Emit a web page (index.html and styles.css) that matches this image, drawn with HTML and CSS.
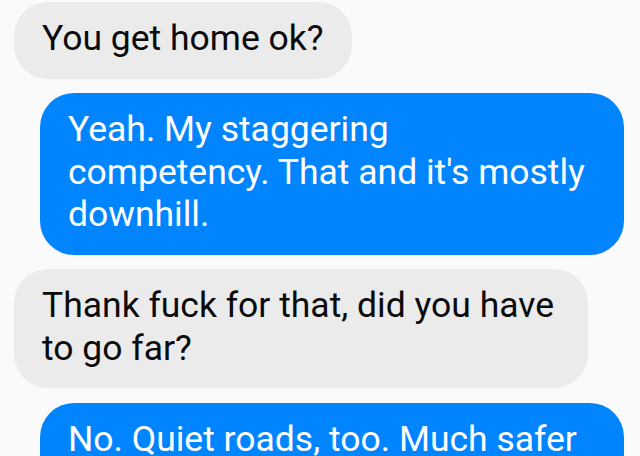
FILE: index.html
```html
<!DOCTYPE html>
<html lang="en">
<head>
  <meta charset="UTF-8">
  <title>Messages</title>
  <link rel="stylesheet" href="styles.css">
</head>
<body>
  <div class="thread">
    <div class="bubble in">You get home ok?</div>
    <div class="bubble out">Yeah. My staggering competency. That and it's mostly downhill.</div>
    <div class="bubble in">Thank fuck for that, did you have to go far?</div>
    <div class="bubble out">No. Quiet roads, too. Much safer than the alternative.</div>
  </div>
</body>
</html>
```

FILE: styles.css
```css
body {
  margin: 0;
  background-color: #fafafa;
  font-family: 'Roboto', sans-serif;
  overflow: hidden;
}

.thread {
  display: flex;
  flex-direction: column;
  gap: 14.5px;
  padding-top: 2px;
}

.bubble {
  font-size: 35.5px;
  line-height: 42.5px;
  padding: 15px 28px 19px;
  border-radius: 34px;
  box-sizing: border-box;
}

.in {
  align-self: flex-start;
  margin-left: 14px;
  max-width: 574px;
  background-color: #ebebeb;
  color: #0a0a0a;
}

.out {
  margin-left: 40px;
  margin-right: 16px;
  background-color: #0185fe;
  color: #fff;
}
```
